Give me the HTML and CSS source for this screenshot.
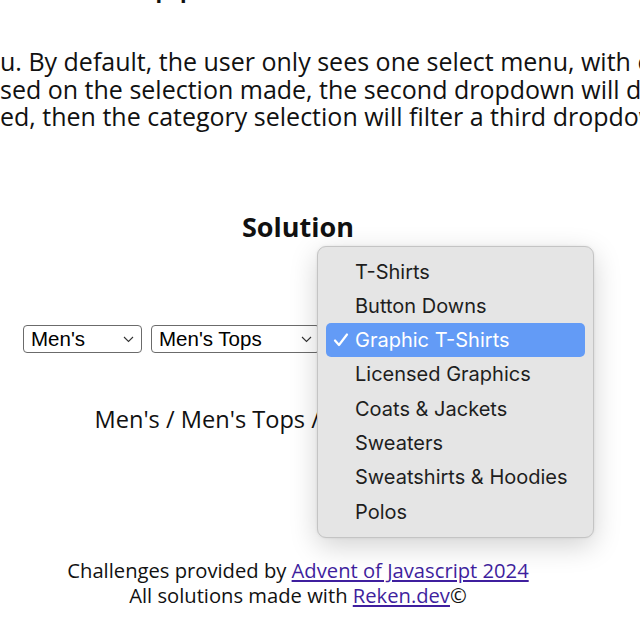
FILE: index.html
```html
<!DOCTYPE html>
<html lang="en">
<head>
<meta charset="utf-8">
<title>The Apparel Select Menus</title>
<link rel="stylesheet" href="styles.css">
</head>
<body>
<main class="page">
  <h1 class="title">The Apparel Select Menus</h1>
  <p class="intro">u. By default, the user only sees one select menu, with options for gender<br>sed on the selection made, the second dropdown will display the categories<br>ed, then the category selection will filter a third dropdown with products</p>

  <section class="solution">
    <h2 class="solution-title">Solution</h2>
    <div class="selects">
      <span class="select-wrap">
        <select class="select select-gender"><option>Men's</option><option>Women's</option></select>
        <svg class="chevron" width="11" height="7" viewBox="0 0 11 7"><path d="M1 1l4.5 4.5L10 1" fill="none" stroke="#333" stroke-width="1.1"/></svg>
      </span>
      <span class="select-wrap">
        <select class="select select-category"><option>Men's Tops</option><option>Men's Bottoms</option></select>
        <svg class="chevron" width="11" height="7" viewBox="0 0 11 7"><path d="M1 1l4.5 4.5L10 1" fill="none" stroke="#333" stroke-width="1.1"/></svg>
      </span>
      <span class="select-wrap select-wrap-open">
        <select class="select select-product"><option>Graphic T-Shirts</option></select>
        <div class="popup">
          <div class="popup-item">T-Shirts</div>
          <div class="popup-item">Button Downs</div>
          <div class="popup-item is-selected"><svg class="check" width="16" height="14" viewBox="0 0 16 14"><path d="M2 7.5l4 4.5L14 1.5" fill="none" stroke="#fff" stroke-width="2.2" stroke-linecap="round" stroke-linejoin="round"/></svg>Graphic T-Shirts</div>
          <div class="popup-item">Licensed Graphics</div>
          <div class="popup-item">Coats &amp; Jackets</div>
          <div class="popup-item">Sweaters</div>
          <div class="popup-item">Sweatshirts &amp; Hoodies</div>
          <div class="popup-item">Polos</div>
        </div>
      </span>
    </div>
    <p class="breadcrumb">Men's / Men's Tops / Graphic T-Shirts</p>
  </section>

  <footer class="footer">
    <p class="footer-line">Challenges provided by <a href="#">Advent of Javascript 2024</a></p>
    <p class="footer-line">All solutions made with <a href="#">Reken.dev</a>©</p>
  </footer>
</main>
</body>
</html>
```

FILE: styles.css
```css
html, body {
  margin: 0;
  padding: 0;
  background: #ffffff;
  overflow: hidden;
}

.page {
  width: 596px;
  font-family: "Open Sans", "Noto Sans", sans-serif;
  color: #111;
  text-align: center;
}

.title {
  font-size: 40px;
  font-weight: 400;
  line-height: 48px;
  margin: -46px 0 0 0;
  text-align: left;
  padding-left: 49px;
  white-space: nowrap;
}

.intro {
  margin: 46px 0 0 0;
  text-align: left;
  white-space: nowrap;
  font-size: 25px;
  line-height: 27.5px;
}

.solution {
  margin-top: 80px;
}

.solution-title {
  margin: 0;
  font-size: 27px;
  font-weight: 700;
  line-height: 32px;
}

.selects {
  margin-top: 82px;
  display: flex;
  justify-content: center;
  gap: 9px;
  height: 28px;
}

.select-wrap {
  position: relative;
  display: block;
}

.select {
  appearance: none;
  -webkit-appearance: none;
  display: block;
  height: 28px;
  margin: 0;
  padding: 0 0 0 7px;
  border: 1px solid #6b6b6b;
  border-radius: 4px;
  background: #fff;
  font-family: "Liberation Sans", Arial, sans-serif;
  font-size: 20.5px;
  color: #000;
}

.select-gender { width: 119px; }
.select-category { width: 169px; }
.select-product { width: 244px; }

.chevron {
  position: absolute;
  right: 8px;
  top: 11px;
}

.popup {
  position: absolute;
  left: -12px;
  top: -79px;
  width: 277px;
  box-sizing: border-box;
  padding: 8px 8px;
  background: #e5e5e5;
  border: 1px solid #c4c4c4;
  border-radius: 9px;
  box-shadow: 0 8px 28px rgba(0, 0, 0, 0.18), 0 0 3px rgba(0, 0, 0, 0.08);
  text-align: left;
  font-family: Inter, "Noto Sans", sans-serif;
  font-size: 20px;
  color: #1e1e1e;
}

.popup-item {
  position: relative;
  height: 34.3px;
  line-height: 34.3px;
  padding-left: 29px;
  border-radius: 5px;
  white-space: nowrap;
}

.popup-item.is-selected {
  background: #639bf6;
  color: #fff;
}

.check {
  position: absolute;
  left: 7px;
  top: 10px;
}

.breadcrumb {
  margin: 52px 0 0 0;
  font-size: 23.6px;
  line-height: 28px;
  white-space: nowrap;
}

.footer {
  margin-top: 125px;
}

.footer-line {
  margin: 0;
  font-size: 20.2px;
  line-height: 25px;
}

.footer a {
  color: #3f1f9e;
}
```
